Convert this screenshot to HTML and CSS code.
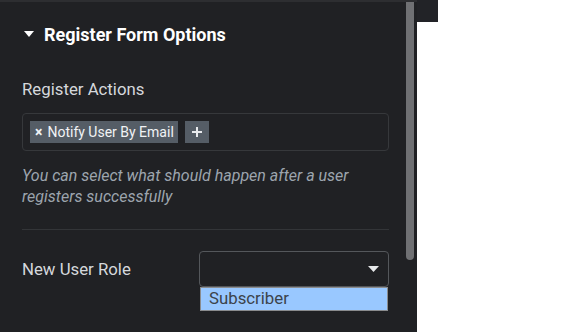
FILE: index.html
```html
<!DOCTYPE html>
<html>
<head>
<meta charset="utf-8">
<link rel="stylesheet" href="styles.css">
</head>
<body>
<div class="page">
  <div class="panel">
    <div class="content">
      <div class="heading">
        <svg class="caret" width="10" height="6" viewBox="0 0 10 6"><path d="M0 0H10L5 6Z" fill="#fff"/></svg>
        <span>Register Form Options</span>
      </div>
      <div class="label">Register Actions</div>
      <div class="tags">
        <span class="chip"><span class="x">×</span>Notify User By Email</span>
        <span class="chip plus"><svg width="12" height="12" viewBox="0 0 12 12"><path d="M6 1V11M1 6H11" stroke="#e8eaed" stroke-width="2"/></svg></span>
      </div>
      <div class="desc">You can select what should happen after a user registers successfully</div>
      <div class="divider"></div>
      <div class="row">
        <div class="label inline">New User Role</div>
        <div class="selectwrap">
          <div class="select">
            <svg width="11" height="6" viewBox="0 0 11 6"><path d="M0 0H11L5.5 6Z" fill="#e6e8ea"/></svg>
          </div>
          <div class="option">Subscriber</div>
        </div>
      </div>
    </div>
    <div class="track"><div class="thumb"></div></div>
  </div>
  <div class="side"><div class="sideblock"></div></div>
</div>
</body>
</html>
```
FILE: styles.css
```css
html, body { margin: 0; padding: 0; }
body { background: #fff; font-family: Roboto, "Liberation Sans", sans-serif; }
.page { display: flex; width: 582px; height: 332px; overflow: hidden; }
.panel {
  width: 417px; height: 332px; background: #202124;
  display: flex; box-sizing: border-box;
  border-top: 2px solid #2d2e31;
}
.content { width: 406px; box-sizing: border-box; padding: 0 17px 0 22px; }
.heading {
  display: flex; align-items: center; height: 26px; margin-top: 19px;
  color: #fff; font-weight: 700; font-size: 18px;
}
.caret { margin: 0 10px 0 2px; }
.label { color: #d5d8dc; font-size: 16.8px; margin-top: 32px; line-height: 20px; }
.tags {
  margin-top: 14px; height: 38px; box-sizing: border-box;
  border: 1px solid #36383b; border-radius: 4px;
  display: flex; align-items: center; padding: 0 7px; gap: 7px;
}
.chip {
  display: flex; align-items: center; height: 22px; background: #555d66;
  color: #f1f3f5; font-size: 14px; padding: 0 4px 0 5px;
}
.chip .x { font-size: 14px; font-weight: 700; margin-right: 5px; }
.chip.plus { width: 24px; padding: 0; justify-content: center; }
.desc {
  margin-top: 14px; color: #9da5ae; font-style: italic; font-size: 16px; line-height: 21px;
  padding-right: 20px;
}
.divider { height: 1px; background: #333538; margin-top: 22px; }
.row { display: flex; align-items: flex-start; margin-top: 21px; }
.label.inline { margin-top: 8px; width: 177px; }
.selectwrap { flex: 1; }
.select {
  height: 36px; box-sizing: border-box; border: 1px solid #54575b; border-radius: 4px;
  display: flex; align-items: center; justify-content: flex-end; padding-right: 9px;
}
.option {
  height: 24px; box-sizing: border-box; background: #99c8ff; border: 1px solid #8a8c8e;
  color: #3c434a; font-size: 16.8px; line-height: 21px; padding-left: 8px; margin: 0 1px;
}
.track { width: 8px; }
.thumb { width: 8px; height: 258px; background: #6f7073; border-radius: 0 0 4px 4px; }
.side { width: 21px; }
.sideblock { height: 22px; background: #222327; }
```
